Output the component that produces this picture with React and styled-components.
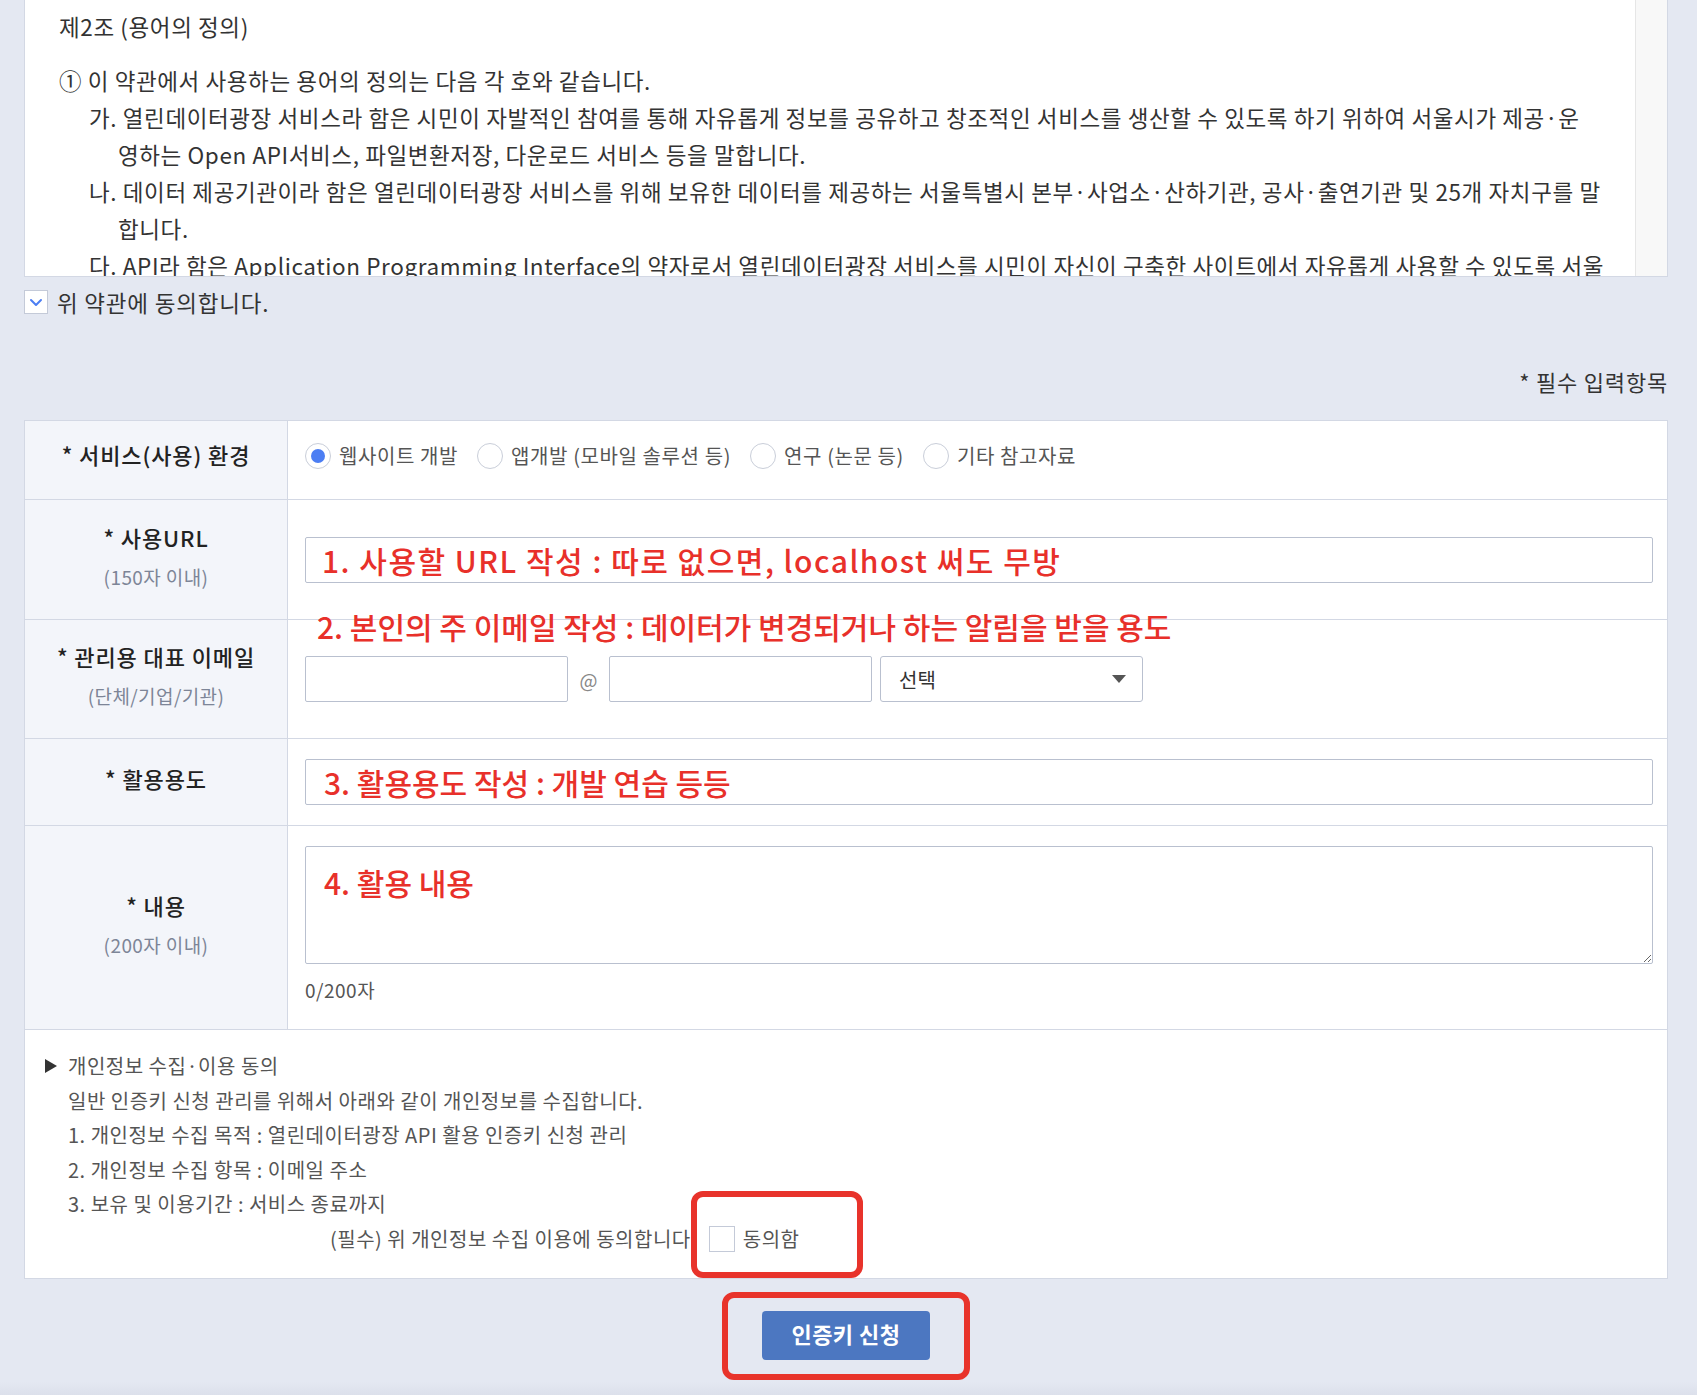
import React from 'react';
import styled, { createGlobalStyle } from 'styled-components';

const GlobalStyle = createGlobalStyle`
  * { box-sizing: border-box; }
  html, body { margin: 0; padding: 0; }
  body {
    background: #e4e8f2;
    font-family: "Noto Sans CJK KR", "Noto Sans", sans-serif;
    color: #333;
  }
`;

const Page = styled.div`
  padding: 0 29px 0 24px;
  min-height: 1395px;
  background: linear-gradient(to bottom, #e4e8f2 1382px, #dce0eb 1395px);
`;

/* ---------- terms box ---------- */

const TermsBox = styled.div`
  display: flex;
  height: 277px;
  background: #fff;
  border: 1px solid #d3d8e4;
  border-top: none;
`;

const TermsText = styled.div`
  flex: 1;
  overflow: hidden;
  padding: 8px 20px 0 34px;
  font-size: 22.5px;
  letter-spacing: 0.6px;
  line-height: 37px;
  color: #333;
  white-space: nowrap;
`;

const ScrollTrack = styled.div`
  width: 32px;
  background: #f8f8f8;
  border-left: 1px solid #e6e6e6;
`;

const TermsTitle = styled.div`
  margin-bottom: 17px;
`;

const TermsItem = styled.div`
  padding-left: ${(p) => (p.$sub ? 59 : 0)}px;
  text-indent: ${(p) => (p.$sub ? -29 : 0)}px;
`;

const AgreeRow = styled.label`
  display: flex;
  align-items: center;
  gap: 9px;
  margin-top: 13px;
  font-size: 22.5px;
  letter-spacing: 0.8px;
  line-height: 24px;
  color: #333;
`;

const CheckBox = styled.span`
  display: inline-flex;
  align-items: center;
  justify-content: center;
  width: ${(p) => p.$size}px;
  height: ${(p) => p.$size}px;
  background: #fff;
  border: 1.5px solid #c4cad8;
  flex-shrink: 0;
`;

const RequiredNote = styled.div`
  margin-top: 53px;
  text-align: right;
  font-size: 22px;
  letter-spacing: 0.8px;
  line-height: 28px;
  color: #333;
`;

/* ---------- form table ---------- */

const FormTable = styled.div`
  margin-top: 25px;
  background: #fff;
  border: 1px solid #d3d8e4;
`;

const Row = styled.div`
  display: grid;
  grid-template-columns: 263px 1fr;
  height: ${(p) => p.$h}px;
  border-bottom: 1px solid #d3d8e4;
`;

const Label = styled.div`
  display: flex;
  flex-direction: column;
  align-items: center;
  justify-content: center;
  gap: 14px;
  padding-bottom: ${(p) => p.$lift || 8}px;
  background: #f3f5fa;
  border-right: 1px solid #d3d8e4;
`;

const LabelMain = styled.div`
  font-size: 22px;
  letter-spacing: 0.9px;
  line-height: 28px;
  font-weight: 500;
  color: #222;
`;

const LabelSub = styled.div`
  font-size: 19px;
  letter-spacing: 0.4px;
  line-height: 24px;
  color: #7d8597;
`;

const Cell = styled.div`
  position: relative;
  display: flex;
  flex-direction: ${(p) => (p.$column ? 'column' : 'row')};
  align-items: ${(p) => (p.$column ? 'stretch' : 'center')};
  padding: ${(p) => (p.$column ? '20px 14px 0 17px' : '0 14px 0 17px')};
`;

const RadioGroup = styled.div`
  display: flex;
  align-items: center;
  gap: 19px;
  margin-top: -9px;
`;

const RadioItem = styled.label`
  display: flex;
  align-items: center;
  gap: 8px;
  font-size: 20px;
  letter-spacing: 0.6px;
  color: #555;
`;

const RadioCircle = styled.span`
  display: inline-flex;
  align-items: center;
  justify-content: center;
  width: 26px;
  height: 26px;
  border-radius: 50%;
  border: 1.5px solid #c9ced9;
  background: #fff;

  &::after {
    content: '';
    width: 14px;
    height: 14px;
    border-radius: 50%;
    background: ${(p) => (p.$on ? '#4c7ef3' : 'transparent')};
  }
`;

const TextField = styled.input`
  width: ${(p) => (p.$w ? `${p.$w}px` : '100%')};
  height: 46px;
  border: 1px solid #b9c0cf;
  border-radius: 2px;
  padding: 0 ${(p) => p.$pad || 16}px;
  font-family: inherit;
  font-size: 30px;
  letter-spacing: ${(p) => p.$ls || 0}px;
  font-weight: 500;
  color: #e8302a;
  background: #fff;
  outline: none;
`;

const At = styled.span`
  width: 41px;
  text-align: center;
  font-size: 19px;
  color: #888;
`;

const SelectBox = styled.div`
  display: flex;
  align-items: center;
  justify-content: space-between;
  width: 263px;
  height: 46px;
  margin-left: 8px;
  padding: 0 16px 0 18px;
  border: 1px solid #b9c0cf;
  border-radius: 3px;
  font-size: 20px;
  color: #333;

  &::after {
    content: '';
    border-top: 8px solid #555;
    border-left: 7px solid transparent;
    border-right: 7px solid transparent;
  }
`;

const Annotation = styled.div`
  position: absolute;
  top: -9px;
  left: 29px;
  font-size: 30px;
  line-height: 30px;
  font-weight: 500;
  color: #e8302a;
  white-space: nowrap;
`;

const TextArea = styled.textarea`
  width: 100%;
  height: 118px;
  padding: 15px 18px;
  border: 1px solid #b9c0cf;
  border-radius: 2px;
  font-family: inherit;
  font-size: 30px;
  line-height: 40px;
  font-weight: 500;
  color: #e8302a;
  resize: vertical;
  outline: none;
`;

const Counter = styled.div`
  margin-top: 12px;
  font-size: 19px;
  letter-spacing: 0.5px;
  line-height: 28px;
  color: #555;
`;

/* ---------- privacy ---------- */

const Privacy = styled.div`
  padding: 19px 21px 22px 20px;
  font-size: 20px;
  letter-spacing: 0.5px;
  line-height: 34.5px;
  color: #555;
`;

const PrivacyHead = styled.div`
  display: flex;
  align-items: center;
  gap: 11px;

  &::before {
    content: '';
    border-left: 12px solid #333;
    border-top: 7.5px solid transparent;
    border-bottom: 7.5px solid transparent;
  }
`;

const PrivacyLine = styled.div`
  padding-left: ${(p) => p.$indent || 23}px;
  display: flex;
  align-items: center;
`;

const AgreeGroup = styled.label`
  position: relative;
  display: inline-flex;
  align-items: center;
  gap: 8px;
  margin-left: 18px;
  color: #555;
  font-size: 20px;
`;

const RedFrame = styled.span`
  position: absolute;
  top: ${(p) => p.$t}px;
  right: ${(p) => p.$r}px;
  bottom: ${(p) => p.$b}px;
  left: ${(p) => p.$l}px;
  border: 6px solid #e8332b;
  border-radius: 12px;
  pointer-events: none;
`;

const ButtonBar = styled.div`
  display: flex;
  justify-content: center;
  margin-top: 32px;
`;

const ButtonWrap = styled.div`
  position: relative;
`;

const SubmitButton = styled.button`
  width: 168px;
  height: 49px;
  padding: 0 0 5px;
  border: none;
  border-radius: 4px;
  background: #4c77c1;
  color: #fff;
  font-family: inherit;
  font-size: 22px;
  font-weight: 700;
  letter-spacing: 0.5px;
`;

const CheckMark = () => (
  <svg width="14" height="10" viewBox="0 0 14 10">
    <polyline points="2,3 7,8 12,3" fill="none" stroke="#4c7ef3" strokeWidth="2" strokeLinecap="round" strokeLinejoin="round" />
  </svg>
);

const radios = ['웹사이트 개발', '앱개발 (모바일 솔루션 등)', '연구 (논문 등)', '기타 참고자료'];

export default function App() {
  return (
    <Page>
      <GlobalStyle />
      <TermsBox>
        <TermsText>
          <TermsTitle>제2조 (용어의 정의)</TermsTitle>
          <TermsItem>① 이 약관에서 사용하는 용어의 정의는 다음 각 호와 같습니다.</TermsItem>
          <TermsItem $sub>
            가. 열린데이터광장 서비스라 함은 시민이 자발적인 참여를 통해 자유롭게 정보를 공유하고 창조적인 서비스를 생산할 수 있도록 하기 위하여 서울시가 제공·운
            <br />
            영하는 Open API서비스, 파일변환저장, 다운로드 서비스 등을 말합니다.
          </TermsItem>
          <TermsItem $sub>
            나. 데이터 제공기관이라 함은 열린데이터광장 서비스를 위해 보유한 데이터를 제공하는 서울특별시 본부·사업소·산하기관, 공사·출연기관 및 25개 자치구를 말
            <br />
            합니다.
          </TermsItem>
          <TermsItem $sub>
            다. API라 함은 Application Programming Interface의 약자로서 열린데이터광장 서비스를 시민이 자신이 구축한 사이트에서 자유롭게 사용할 수 있도록 서울
            <br />
            시가 제공하는 기술을 말합니다.
          </TermsItem>
        </TermsText>
        <ScrollTrack />
      </TermsBox>

      <AgreeRow>
        <CheckBox $size={24}>
          <CheckMark />
        </CheckBox>
        위 약관에 동의합니다.
      </AgreeRow>

      <RequiredNote>* 필수 입력항목</RequiredNote>

      <FormTable>
        <Row $h={79}>
          <Label $lift={12}>
            <LabelMain>* 서비스(사용) 환경</LabelMain>
          </Label>
          <Cell>
            <RadioGroup>
              {radios.map((r, i) => (
                <RadioItem key={r}>
                  <RadioCircle $on={i === 0} />
                  {r}
                </RadioItem>
              ))}
            </RadioGroup>
          </Cell>
        </Row>

        <Row $h={120}>
          <Label>
            <LabelMain>* 사용URL</LabelMain>
            <LabelSub>(150자 이내)</LabelSub>
          </Label>
          <Cell>
            <TextField $ls={1.5} readOnly defaultValue="1. 사용할 URL 작성 : 따로 없으면, localhost 써도 무방" />
          </Cell>
        </Row>

        <Row $h={119}>
          <Label>
            <LabelMain>* 관리용 대표 이메일</LabelMain>
            <LabelSub>(단체/기업/기관)</LabelSub>
          </Label>
          <Cell>
            <Annotation>2. 본인의 주 이메일 작성 : 데이터가 변경되거나 하는 알림을 받을 용도</Annotation>
            <TextField $w={263} readOnly />
            <At>@</At>
            <TextField $w={263} readOnly />
            <SelectBox>선택</SelectBox>
          </Cell>
        </Row>

        <Row $h={87}>
          <Label>
            <LabelMain>* 활용용도</LabelMain>
          </Label>
          <Cell>
            <TextField $pad={18} readOnly defaultValue="3. 활용용도 작성 : 개발 연습 등등" />
          </Cell>
        </Row>

        <Row $h={204}>
          <Label>
            <LabelMain>* 내용</LabelMain>
            <LabelSub>(200자 이내)</LabelSub>
          </Label>
          <Cell $column>
            <TextArea readOnly defaultValue="4. 활용 내용" />
            <Counter>0/200자</Counter>
          </Cell>
        </Row>

        <Privacy>
          <PrivacyHead>개인정보 수집·이용 동의</PrivacyHead>
          <PrivacyLine>일반 인증키 신청 관리를 위해서 아래와 같이 개인정보를 수집합니다.</PrivacyLine>
          <PrivacyLine>1. 개인정보 수집 목적 : 열린데이터광장 API 활용 인증키 신청 관리</PrivacyLine>
          <PrivacyLine>2. 개인정보 수집 항목 : 이메일 주소</PrivacyLine>
          <PrivacyLine>3. 보유 및 이용기간 : 서비스 종료까지</PrivacyLine>
          <PrivacyLine $indent={285}>
            (필수) 위 개인정보 수집 이용에 동의합니다
            <AgreeGroup>
              <CheckBox $size={26} />
              동의함
              <RedFrame $t={-31} $r={-64} $b={-22} $l={-18} />
            </AgreeGroup>
          </PrivacyLine>
        </Privacy>
      </FormTable>

      <ButtonBar>
        <ButtonWrap>
          <SubmitButton>인증키 신청</SubmitButton>
          <RedFrame $t={-19} $r={-40} $b={-20} $l={-40} />
        </ButtonWrap>
      </ButtonBar>
    </Page>
  );
}
